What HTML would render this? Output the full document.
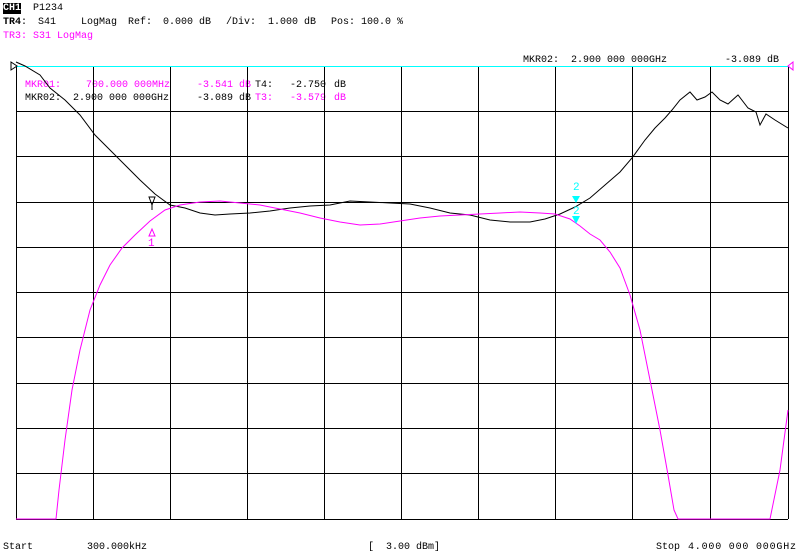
<!DOCTYPE html><html><head><style>
body{margin:0;width:799px;height:555px;background:#fff;overflow:hidden;position:relative;font-family:"Liberation Mono",monospace;font-size:10px}
.t{position:absolute;white-space:pre;line-height:11px}
.m{color:#f0f}
</style></head><body>
<div class="t" style="left:3px;top:3px;background:#000;color:#fff;font-weight:bold">CH1</div>
<div class="t" style="left:33px;top:3px">P1234</div>
<div class="t" style="left:3px;top:17px"><b>TR4</b>:</div>
<div class="t" style="left:38px;top:17px">S41</div>
<div class="t" style="left:81px;top:17px">LogMag</div>
<div class="t" style="left:128px;top:17px">Ref:</div>
<div class="t" style="left:163px;top:17px">0.000 dB</div>
<div class="t" style="left:226px;top:17px">/Div:</div>
<div class="t" style="left:268px;top:17px">1.000 dB</div>
<div class="t" style="left:331px;top:17px">Pos: 100.0 %</div>
<div class="t m" style="left:3px;top:31px">TR3: S31 LogMag</div>
<div class="t" style="left:523px;top:55px">MKR02:</div>
<div class="t" style="left:571px;top:55px">2.900 000 000GHz</div>
<div class="t" style="left:725px;top:55px">-3.089 dB</div>
<div class="t m" style="left:25px;top:80px">MKR01:</div>
<div class="t m" style="left:86px;top:80px">700.000 000MHz</div>
<div class="t m" style="left:197px;top:80px">-3.541 dB</div>
<div class="t" style="left:255px;top:80px">T4:</div>
<div class="t" style="left:290px;top:80px">-2.750</div>
<div class="t" style="left:334px;top:80px">dB</div>
<div class="t" style="left:25px;top:93px">MKR02:</div>
<div class="t" style="left:73px;top:93px">2.900 000 000GHz</div>
<div class="t" style="left:197px;top:93px">-3.089 dB</div>
<div class="t m" style="left:255px;top:93px">T3:</div>
<div class="t m" style="left:290px;top:93px">-3.579</div>
<div class="t m" style="left:334px;top:93px">dB</div>
<div class="t" style="left:3px;top:542px">Start</div>
<div class="t" style="left:87px;top:542px">300.000kHz</div>
<div class="t" style="left:368px;top:542px">[  3.00 dBm]</div>
<div class="t" style="left:656px;top:542px">Stop</div>
<div class="t" style="left:688px;top:542px;letter-spacing:0.8px">4.000 000 000GHz</div>
<svg width="799" height="555" style="position:absolute;left:0;top:0">
<g stroke="#000" stroke-width="1" shape-rendering="crispEdges">
<path d="M16.5 66V519M93.5 66V519M170.5 66V519M247.5 66V519M324.5 66V519M401.5 66V519M478.5 66V519M555.5 66V519M632.5 66V519M710.5 66V519M788.5 66V519"/>
<path d="M16 111.5H788M16 156.5H788M16 202.5H788M16 247.5H788M16 292.5H788M16 337.5H788M16 383.5H788M16 428.5H788M16 473.5H788M16 519.5H788"/>
</g>
<line x1="16" y1="66.5" x2="789" y2="66.5" stroke="#0ff"/>
<path d="M11 62l6 4-6 4z" fill="none" stroke="#000"/>
<path d="M793 62l-5 4 5 4z" fill="none" stroke="#f0f"/>
<polyline fill="none" stroke="#000" points="16,62 25,66 40,75 50,88 65,100 80,115 95,135 110,150 125,165 140,180 155,194 170,205 185,208 200,213 215,215 230,214 250,213 270,211 290,208 310,206 330,205 350,201 370,202 390,203 410,204 430,208 450,213 470,215 490,220 510,222 530,222 545,219 560,214 575,207 590,198 605,185 620,172 632,158 645,140 655,128 665,118 672,110 680,100 690,92 697,100 705,97 712,92 720,100 728,104 738,95 748,108 756,112 760,125 766,114 775,120 788,128"/>
<polyline fill="none" stroke="#f0f" points="16,519 56,519 59,490 65,440 72,390 80,350 90,310 100,285 110,265 122,248 135,235 150,221 165,210 180,205 200,202 220,201 240,203 260,205 280,209 300,213 320,218 340,222 360,225 380,224 400,221 420,218 440,216 460,215 480,214 500,213 520,212 540,213 555,214 570,219 580,226 590,234 600,240 610,252 620,268 630,295 640,330 650,380 660,430 668,475 674,510 678,519 770,519 780,470 788,410"/>
<path d="M149 197l3 8 3-8zM152 205v5" fill="none" stroke="#000"/>
<path d="M149 236l3-7 3 7z" fill="none" stroke="#f0f"/>
<text x="148" y="246" fill="#f0f" font-size="11" font-family="Liberation Mono">1</text>
<path d="M572 196h8l-4 7zM572 216h8l-4 8z" fill="#0ff"/>
<text x="573" y="190" fill="#0ff" font-size="11" font-family="Liberation Mono">2</text>
<text x="573" y="214" fill="#0ff" font-size="11" font-family="Liberation Mono">2</text>
</svg>
</body></html>
